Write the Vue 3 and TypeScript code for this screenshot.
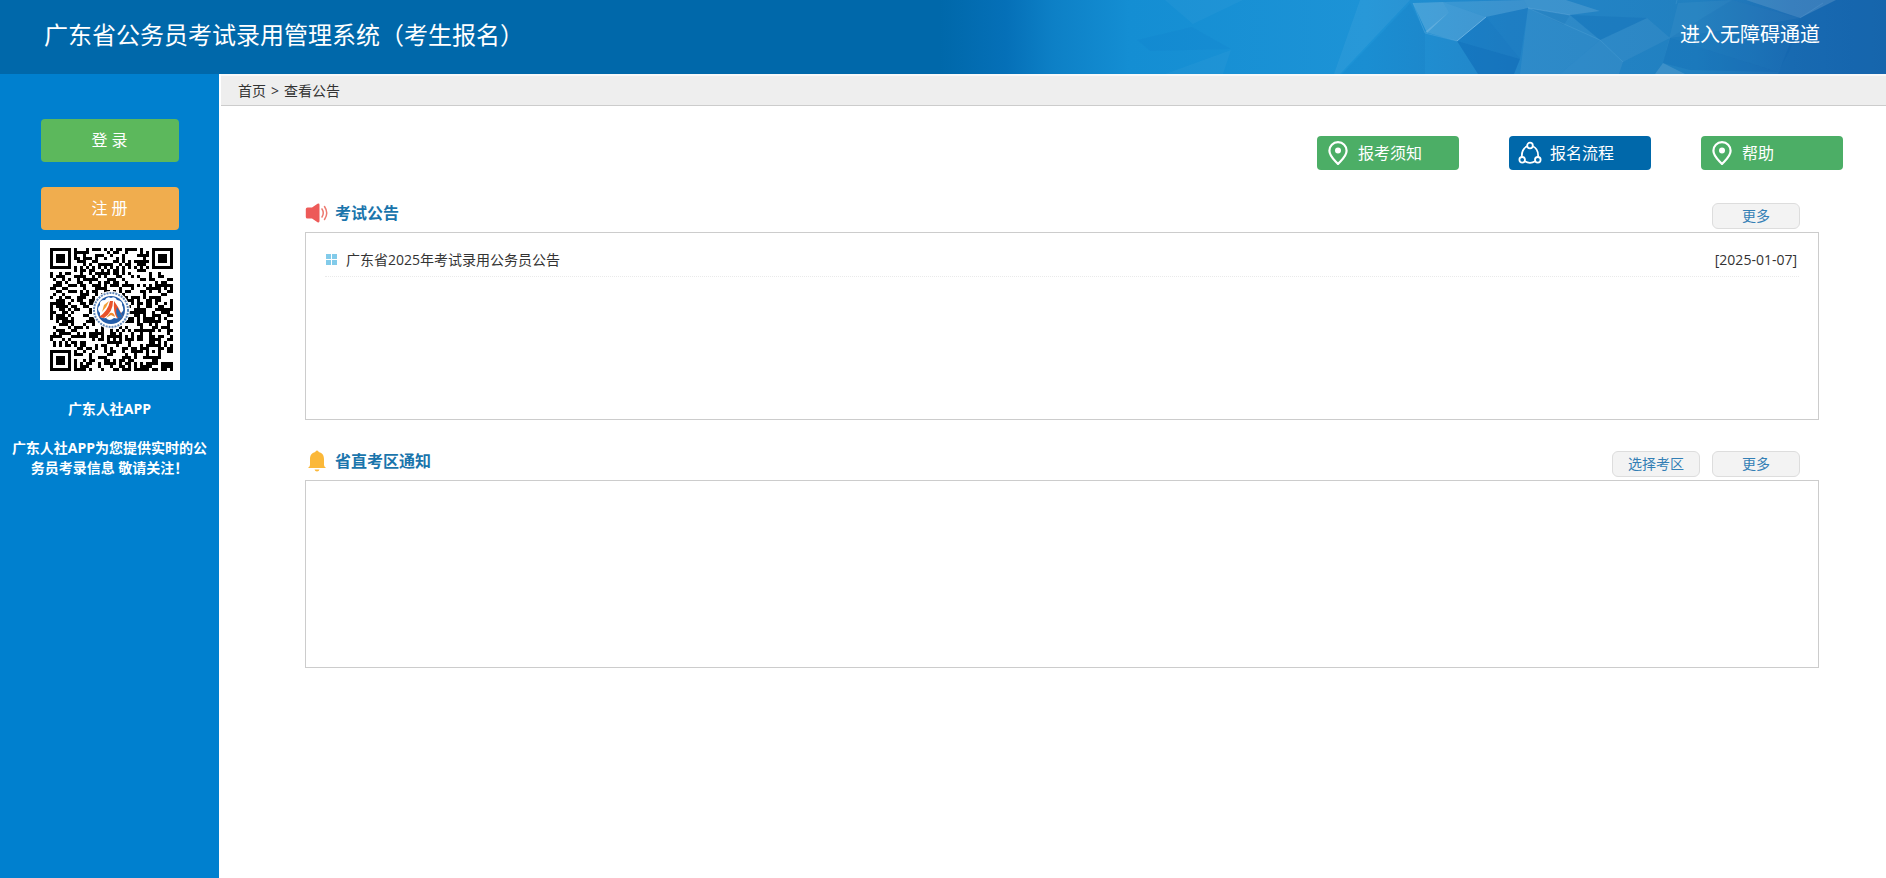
<script setup lang="ts">
interface Notice {
  title: string
  date: string
}

interface Section {
  id: string
  title: string
  icon: 'speaker' | 'bell'
  actions: string[]
  notices: Notice[]
}

interface QuickLink {
  label: string
  icon: 'pin' | 'flow'
}

const quickLinks: QuickLink[] = [
  { label: '报考须知', icon: 'pin' },
  { label: '报名流程', icon: 'flow' },
  { label: '帮助', icon: 'pin' },
]

const sections: Section[] = [
  {
    id: 'exam',
    title: '考试公告',
    icon: 'speaker',
    actions: ['更多'],
    notices: [{ title: '广东省2025年考试录用公务员公告', date: '2025-01-07' }],
  },
  {
    id: 'district',
    title: '省直考区通知',
    icon: 'bell',
    actions: ['选择考区', '更多'],
    notices: [],
  },
]

// Module grid of the app code: finders, timing lines, alignment mark, data area.
const size = 41

function finder(x: number, y: number): boolean {
  const d = Math.max(Math.abs(x - 3), Math.abs(y - 3))
  return d === 3 || d <= 1
}

function isDark(x: number, y: number): boolean {
  const far = size - 8
  if (x < 8 && y < 8) return finder(x, y)
  if (x >= far && y < 8) return finder(size - 1 - x, y)
  if (x < 8 && y >= far) return finder(x, size - 1 - y)
  if (x === 6 || y === 6) return (x + y) % 2 === 0
  const a = Math.max(Math.abs(x - 34), Math.abs(y - 34))
  if (a <= 2) return a !== 1
  let h = Math.imul(x + 11, 374761393) ^ Math.imul(y + 7, 668265263)
  h = Math.imul(h ^ (h >>> 13), 1274126177)
  return (((h ^ (h >>> 16)) >>> 3) & 1) === 1
}

function buildCode(): string {
  let path = ''
  for (let y = 0; y < size; y++) {
    for (let x = 0; x < size; x++) {
      if (isDark(x, y)) path += `M${x} ${y}h1v1h-1z`
    }
  }
  return path
}

const codePath = buildCode()
</script>

<template>
  <div class="page">
    <header class="header">
      <svg class="facets" viewBox="0 0 946 74" width="946" height="74" aria-hidden="true">
        <defs>
          <linearGradient id="sky" x1="0" x2="1" y1="0" y2="0">
            <stop offset="0" stop-color="#0068aa" />
            <stop offset="0.07" stop-color="#0570b8" />
            <stop offset="0.12" stop-color="#0d80c6" />
            <stop offset="0.2" stop-color="#148ed3" />
            <stop offset="0.45" stop-color="#1d93d6" />
            <stop offset="0.6" stop-color="#2385c8" />
            <stop offset="0.8" stop-color="#2180c0" />
            <stop offset="0.9" stop-color="#1e6eb4" />
            <stop offset="1" stop-color="#1b68ae" />
          </linearGradient>
        </defs>
        <rect width="946" height="74" fill="url(#sky)" />
        <g fill="#fff">
          <path d="M225 0l28 24 50-24z" opacity=".03" />
          <path d="M225 74l66-24-8 24z" opacity=".03" />
          <path d="M420 0h50l-70 74h-6z" opacity=".05" />
          <path d="M473 3l30-1 6 10-22 21z" opacity=".17" />
          <path d="M503 2l43 15-29 24-32-9 24-20z" opacity=".14" />
          <path d="M503 2l81-2 4 8-42 9z" opacity=".11" />
          <path d="M588 8l42 7 30-4-34-11h-42z" opacity=".12" />
          <path d="M588 8l42 7 30 25-40 34h-40z" opacity=".05" />
          <path d="M620 74l40-34 23 22-4 12z" opacity=".06" />
          <path d="M660 40l47-22 23 20-47 24z" opacity=".05" />
          <path d="M723 63l15-60 54-3 68 18-48 8-82 12z" opacity=".04" />
          <path d="M806 0h90l-36 18z" opacity=".12" />
          <path d="M723 63l22 11h-30z" opacity=".12" />
        </g>
        <g fill="#0057a8">
          <path d="M197 40l55-13 39 22-81 2z" opacity=".05" />
          <path d="M470 3l-68 71h83l0-41z" opacity=".08" />
          <path d="M517 41l29-24 34 42z" opacity=".2" />
          <path d="M517 41l63 18-6 15h-36z" opacity=".35" />
          <path d="M546 17l42-9-8 51z" opacity=".14" />
          <path d="M630 15l77 3-47 22z" opacity=".15" />
          <path d="M588 8l42 7-6 10z" opacity=".12" />
          <path d="M730 38l108 34-88-2-27-7z" opacity=".16" />
          <path d="M730 38l62-38 68 18-10 32-12 22z" opacity=".1" />
          <path d="M860 18l36-18h50v74H838z" opacity=".18" />
        </g>
        <g fill="none" stroke="#9fd4f5" stroke-width="1">
          <path d="M517 41l29-24" opacity=".5" />
          <path d="M473 3l12 30 32 8M588 8l42 7" opacity=".2" />
          <path d="M737 0l-1 4M860 18l23-15M588 8l72 32 23 22" opacity=".12" />
        </g>
      </svg>
      <h1 class="title">广东省公务员考试录用管理系统（考生报名）</h1>
      <a class="access" href="#">进入无障碍通道</a>
    </header>

    <div class="body">
      <aside class="sidebar">
        <button class="side-btn login" type="button">登 录</button>
        <button class="side-btn register" type="button">注 册</button>
        <svg class="code" viewBox="0 0 140 140" role="img" aria-label="广东人社APP">
          <rect width="140" height="140" fill="#fff" />
          <path :d="codePath" transform="translate(10 8) scale(3)" shape-rendering="crispEdges" />
          <circle cx="71" cy="70" r="19" fill="#fff" />
          <circle cx="71" cy="70" r="17" fill="none" stroke="#6289ba" stroke-width="2" stroke-dasharray="2 1" />
          <circle cx="71" cy="70" r="14" fill="#245eaa" />
          <path d="M71 58q4-2 6 2 6 1 5 5 3 5-1 8-1 7-7 5-5 4-8 0-7 1-6-5-4-4 0-8-1-5 5-5 2-4 6-2z" fill="#fff" />
          <path d="M70 61h3q0 11-9 17l-5-1q9-6 11-16z" fill="#e9532b" />
          <path d="M69 61l-5 4-2 7q5-5 7-11z" fill="#f4a13a" />
          <path d="M74 61l4 6 5 10-6 1q-4-6-3-17z" fill="#e9532b" />
          <path d="M77 67l6 10-5 1q-3-5-1-11z" fill="#246bb6" />
          <path d="M70 73q4-1 5 4l-4-2-5 3z" fill="#f08a2e" />
        </svg>
        <p class="app-name">广东人社APP</p>
        <p class="app-text">广东人社APP为您提供实时的公务员考录信息 敬请关注！</p>
      </aside>

      <main class="main">
        <nav class="crumbs" aria-label="当前位置">
          <a href="#">首页</a><span>&gt;</span><span>查看公告</span>
        </nav>

        <div class="quick">
          <a v-for="link in quickLinks" :key="link.label" href="#" class="quick-btn" :class="link.icon">
            <svg v-if="link.icon === 'pin'" viewBox="0 0 24 24" aria-hidden="true">
              <path d="M12 1.200C7 1.200 3.400 5 3.400 9.700 3.400 15 8 18.600 12 23c4-4.400 8.600-8 8.600-13.300C20.600 5 17 1.200 12 1.200z" fill="none" stroke="#fff" stroke-width="2.200" />
              <circle cx="12" cy="9.500" r="3" fill="#fff" />
            </svg>
            <svg v-else viewBox="0 0 24 24" aria-hidden="true">
              <g fill="none" stroke="#fff" stroke-width="1.800">
                <circle cx="12" cy="4.500" r="2.800" />
                <circle cx="4.200" cy="18.800" r="2.800" />
                <circle cx="19.800" cy="18.800" r="2.800" />
                <path d="M9.200 5.300C5.500 7 3.600 11.500 3.900 16M14.800 5.300c3.700 1.700 5.600 6.200 5.300 10.700M6.800 20.300q5.200 3.200 10.400 0" />
              </g>
            </svg>
            {{ link.label }}
          </a>
        </div>

        <section v-for="section in sections" :key="section.id" class="section">
          <div class="section-head">
            <svg v-if="section.icon === 'speaker'" class="head-icon" viewBox="0 0 24 24" aria-hidden="true">
              <path d="M2.500 6.500H7l5.500-3.700Q14.500 2 14.500 4v16q0 2-2 1.200L7 17.500H2.500Q.8 17.500.8 16V8q0-1.500 1.700-1.500z" fill="#ed5a58" />
              <path d="M17 8q2.500 4 0 8M19.500 5.500q4.500 6.500 0 13" fill="none" stroke="#ed7a70" stroke-width="1.500" stroke-linecap="round" />
            </svg>
            <svg v-else class="head-icon" viewBox="0 0 24 24" aria-hidden="true">
              <path d="M12 1.500q1.500 0 1.700 1.500C17.500 3.800 19 6.500 19 10.500V16q0 1.500 2 3H3q2-1.500 2-3v-5.500c0-4 1.500-6.700 5.300-7.500Q10.500 1.500 12 1.500z" fill="#fbb839" />
              <path d="M9.500 20.500h5q-.5 2-2.500 2t-2.500-2z" fill="#fbb839" />
            </svg>
            <h2>{{ section.title }}</h2>
            <div class="actions">
              <button v-for="action in section.actions" :key="action" type="button">{{ action }}</button>
            </div>
          </div>
          <ul class="panel">
            <li v-for="notice in section.notices" :key="notice.title">
              <svg viewBox="0 0 11 11" aria-hidden="true">
                <path d="M0 0h5v5H0zM6 0h5v5H6zM0 6h5v5H0zM6 6h5v5H6z" fill="#82cbea" />
              </svg>
              <a href="#">{{ notice.title }}</a>
              <time :datetime="notice.date">[{{ notice.date }}]</time>
            </li>
          </ul>
        </section>
      </main>
    </div>
  </div>
</template>

<style>
body {
  margin: 0;
}
</style>

<style scoped>
.page {
  display: flex;
  flex-direction: column;
  min-height: 100vh;
  background: #fff;
  color: #333;
  font: 14px/20px "Open Sans", "Noto Sans CJK SC", sans-serif;
}

.page * {
  box-sizing: border-box;
}

a {
  color: inherit;
  text-decoration: none;
}

button {
  padding: 0;
  border: 0;
  font: inherit;
  cursor: pointer;
}

h1,
h2,
p {
  margin: 0;
}

.header {
  position: relative;
  display: flex;
  align-items: center;
  justify-content: space-between;
  height: 74px;
  padding: 0 66px 4px 44px;
  overflow: hidden;
  background: #0068aa;
  color: #fff;
}

.facets {
  position: absolute;
  top: 0;
  right: 0;
}

.title {
  position: relative;
  font-size: 24px;
  font-weight: 400;
  line-height: 32px;
}

.access {
  position: relative;
  font-size: 20px;
  line-height: 28px;
}

.body {
  display: flex;
  flex: 1;
}

.sidebar {
  display: flex;
  flex: none;
  flex-direction: column;
  align-items: center;
  width: 219px;
  padding: 45px 8px 0;
  background: #0080cf;
  color: #fff;
  font-weight: 700;
  text-align: center;
}

.side-btn {
  width: 138px;
  height: 43px;
  padding-bottom: 2px;
  border-radius: 4px;
  color: #fff;
  font-size: 16px;
  font-weight: 400;
}

.login {
  margin-bottom: 25px;
  background: #5cb85c;
}

.register {
  margin-bottom: 10px;
  background: #f0ad4e;
}

.code {
  display: block;
  width: 140px;
  height: 140px;
}

.app-name {
  margin: 19px 0;
}

.main {
  flex: 1;
  min-width: 0;
  padding-left: 2px;
}

.crumbs {
  display: flex;
  gap: 5px;
  height: 32px;
  padding: 5px 17px 0;
  border-top: 2px solid #f8f8f8;
  border-bottom: 1px solid #ccc;
  background: #eee;
}

.quick {
  display: flex;
  justify-content: flex-end;
  gap: 50px;
  padding: 30px 43px 0 0;
}

.quick-btn {
  display: flex;
  align-items: center;
  gap: 8px;
  width: 142px;
  height: 34px;
  padding-left: 9px;
  border-radius: 4px;
  background: #4cae66;
  color: #fff;
  font-size: 16px;
}

.quick-btn.flow {
  background: #0068aa;
}

.quick-btn svg {
  width: 24px;
  height: 24px;
}

.section {
  margin: 26px 67px 0 84px;
}

.section-head {
  display: flex;
  align-items: center;
  height: 36px;
  padding-bottom: 2px;
}

.section + .section {
  margin-top: 24px;
}

.head-icon {
  width: 24px;
  height: 24px;
  margin-right: 6px;
}

h2 {
  color: #1a75ac;
  font-size: 16px;
  font-weight: 700;
  line-height: 24px;
}

.actions {
  display: flex;
  gap: 12px;
  margin: 6px 19px 0 auto;
}

.actions button {
  width: 88px;
  height: 26px;
  border: 1px solid #ddd;
  border-radius: 6px;
  background: #f3f3f3;
  color: #337fb5;
}

.panel {
  min-height: 188px;
  margin: 0;
  padding: 7px 19px;
  border: 1px solid #ccc;
  list-style: none;
}

.panel li {
  display: flex;
  align-items: center;
  height: 37px;
  padding-top: 3px;
  border-bottom: 1px dotted #eaeaea;
}

.panel svg {
  width: 11px;
  height: 11px;
  margin: 0 9px 0 1px;
}

.panel time {
  margin-left: auto;
  padding-right: 2px;
}
</style>
